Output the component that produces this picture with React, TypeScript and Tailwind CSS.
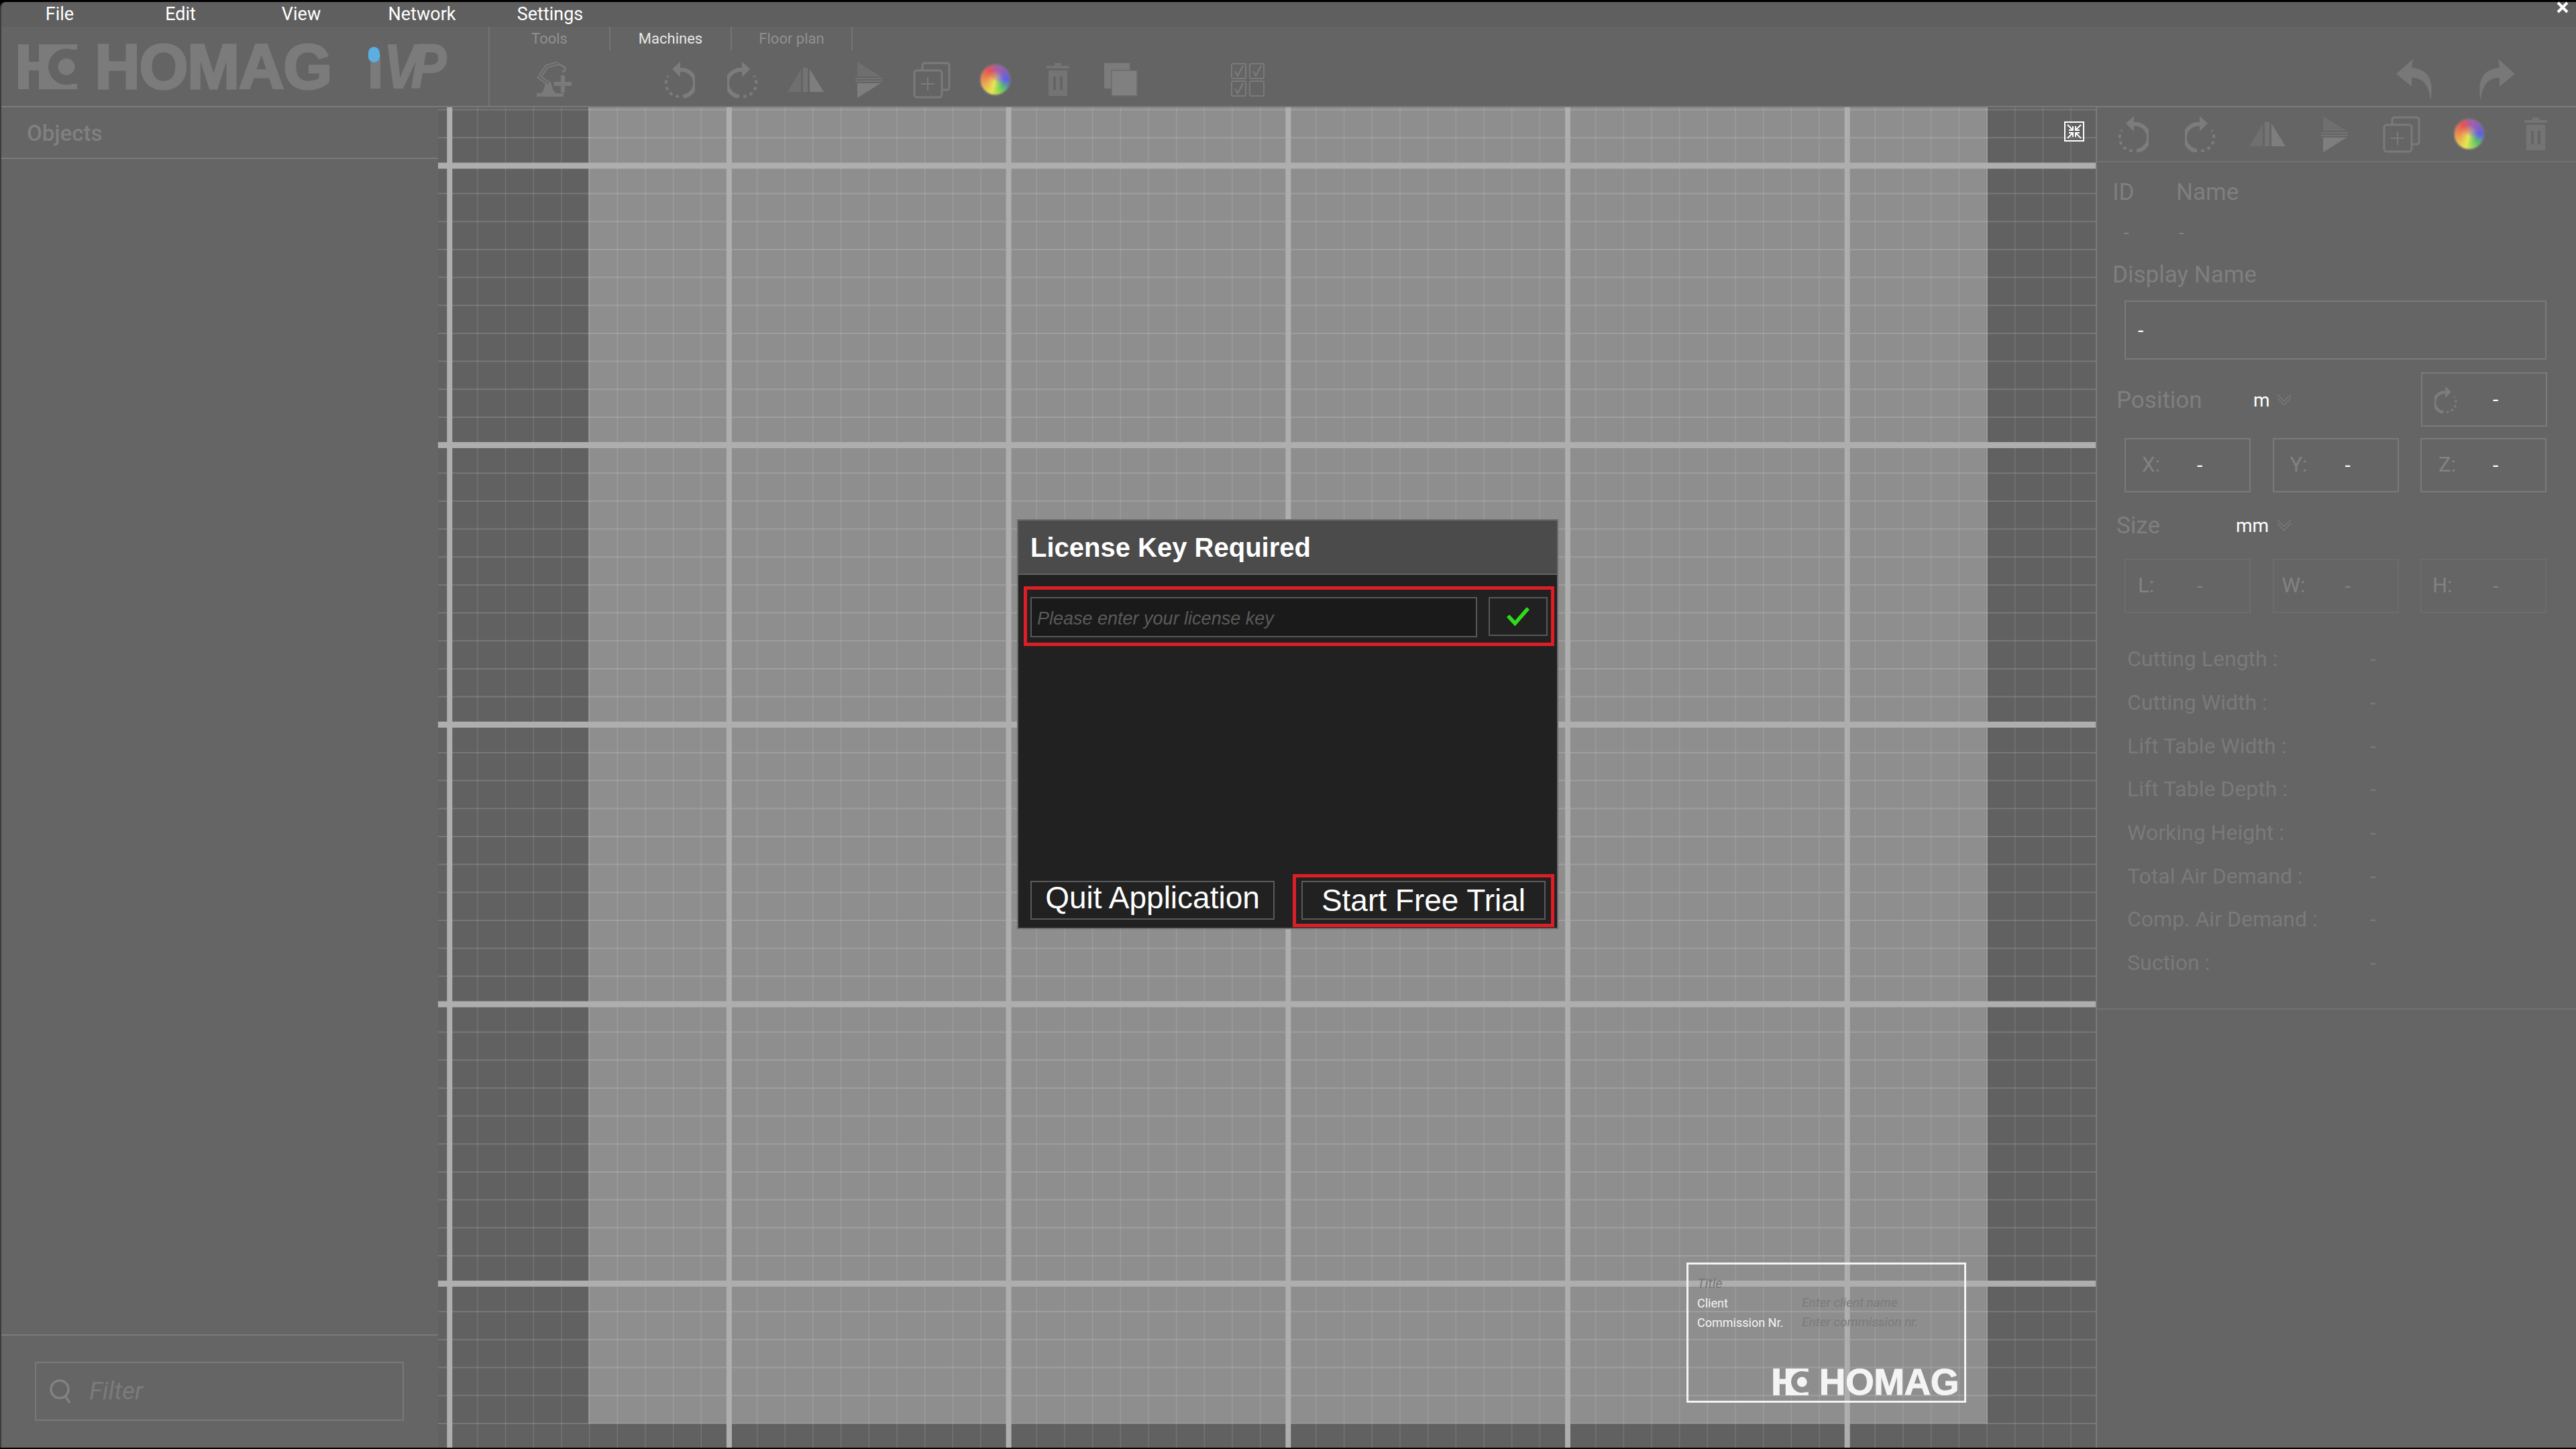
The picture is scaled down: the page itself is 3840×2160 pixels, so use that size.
const MENU = ["File", "Edit", "View", "Network"];

const STATS = [
  "Cutting Length :",
  "Cutting Width :",
  "Lift Table Width :",
  "Lift Table Depth :",
  "Working Height :",
  "Total Air Demand :",
  "Comp. Air Demand :",
  "Suction :",
];

const POSITION = [
  { label: "X:", pad: "pl-[24px]" },
  { label: "Y:", pad: "pl-[24px]" },
  { label: "Z:", pad: "pl-[25px]" },
];

const SIZE = [
  { label: "L:", pad: "pl-[18px]" },
  { label: "W:", pad: "pl-[12px]" },
  { label: "H:", pad: "pl-[16px]" },
];

const GRID_STEP = 41.667;
const GRID_W = 2471;
const GRID_H = 1998;

function RotateIcon({ flip = false, small = false, color = "#7c7c7c" }: { flip?: boolean; small?: boolean; color?: string }) {
  return (
    <svg
      viewBox="0 0 46 54"
      className={small ? "h-[40px] w-[34px]" : "h-[54px] w-[46px]"}
      style={{ transform: flip ? "scaleX(-1)" : undefined }}
    >
      <path d="M24 12 A20 20 0 0 1 28 52" fill="none" stroke={color} strokeWidth="6" />
      <path d="M22 52 A20 20 0 0 1 6 21" fill="none" stroke={color} strokeWidth="4" strokeDasharray="5 5" />
      <polygon points="24,0 24,23 12,11" fill={color} />
    </svg>
  );
}

function MirrorH() {
  return (
    <svg viewBox="0 0 56 36" className="h-[36px] w-[56px]">
      <polygon points="1,36 21,36 21,2" fill="#6f6f6f" />
      <rect x="24" y="0" width="7" height="36" fill="#747474" />
      <polygon points="34,2 34,36 55,36" fill="#7e7e7e" />
    </svg>
  );
}

function MirrorV() {
  return (
    <svg viewBox="0 0 40 54" className="h-[54px] w-[40px]">
      <polygon points="3,0 38,22 3,22" fill="#6f6f6f" />
      <rect x="0" y="24" width="40" height="2" fill="#747474" />
      <rect x="0" y="28" width="40" height="2" fill="#747474" />
      <polygon points="3,32 38,32 3,54" fill="#7e7e7e" />
    </svg>
  );
}

function CopyPlus() {
  return (
    <svg viewBox="0 0 56 55" className="h-[55px] w-[56px]" fill="none" stroke="#7a7a7a" strokeWidth="3">
      <path d="M14 12 V6 Q14 2 18 2 H50 Q54 2 54 6 V38 Q54 42 50 42 H43" />
      <rect x="2" y="13" width="41" height="40" rx="4" />
      <path d="M22 23 V43 M12 33 H32" strokeWidth="2" />
    </svg>
  );
}

function ColorWheel() {
  return (
    <div className="h-[48px] w-[47px] rounded-full border-2 border-[#767076] bg-[radial-gradient(circle,#eeee6099_0%,#eeee6000_45%),conic-gradient(#a45fa8_20deg,#5c60e6_90deg,#5fc860_140deg,#e6e650_195deg,#e89050_270deg,#e45555_325deg,#a45fa8_380deg)] blur-[1px]" />
  );
}

function TrashIcon() {
  return (
    <svg viewBox="0 0 34 50" className="h-[50px] w-[34px]">
      <rect x="12" y="0" width="10" height="4" fill="#747474" />
      <rect x="0" y="4" width="34" height="4" fill="#747474" />
      <path d="M3 11 H31 V49 H3 Z M10 20 V40 H14 V20 Z M20 20 V40 H24 V20 Z" fill="#747474" fillRule="evenodd" />
    </svg>
  );
}

function StackIcon() {
  return (
    <svg viewBox="0 0 50 50" className="h-[50px] w-[50px]">
      <rect x="0" y="0" width="38" height="38" fill="#7b7b7b" />
      <rect x="11" y="11" width="38" height="38" fill="#808080" stroke="#6b6b6b" strokeWidth="1.5" />
    </svg>
  );
}

function ChecksIcon() {
  return (
    <svg viewBox="0 0 50 50" className="h-[50px] w-[50px]" fill="none" stroke="#7a7a7a" strokeWidth="2">
      <rect x="1" y="1" width="21" height="22" rx="2" />
      <rect x="28" y="1" width="21" height="22" rx="2" />
      <rect x="1" y="27" width="21" height="22" rx="2" />
      <rect x="28" y="27" width="21" height="22" rx="2" />
      <path d="M6 12 L10 19 L18 4 M33 12 L37 19 L45 4 M6 38 L10 45 L18 30" strokeWidth="2.5" />
    </svg>
  );
}

function RobotPlus() {
  return (
    <svg viewBox="0 0 54 54" className="h-[54px] w-[54px]" fill="none" stroke="#7a7a7a">
      <rect x="0" y="47" width="40" height="5" fill="#7a7a7a" stroke="none" />
      <path d="M7 47 L11 41 L13 30 H21 L24 41 L28 47 Z" fill="#7a7a7a" stroke="none" />
      <path d="M18 33 L4 23 L15 7 L32 2" strokeWidth="6" />
      <path d="M18 33 L4 23 L15 7 L32 2" strokeWidth="2" stroke="#646464" />
      <path d="M32 3 L42 8 M42 8 Q44 14 38 15" strokeWidth="3" />
      <path d="M39 20 V46 M26 33 H52" strokeWidth="6" />
    </svg>
  );
}

function BigArrow({ flip = false }: { flip?: boolean }) {
  return (
    <svg viewBox="0 0 56 62" className="h-[62px] w-[56px]" style={{ transform: flip ? "scaleX(-1)" : undefined }}>
      <path d="M25 0 L0 22 L23 41 V28 Q48 27 51 62 Q60 16 23 13 Z" fill="#787878" />
    </svg>
  );
}

function HomagMark({ className, fg, bg }: { className: string; fg: string; bg: string }) {
  return (
    <svg viewBox="0 0 88 67" className={className}>
      <rect x="0" y="0" width="16" height="67" fill={fg} />
      <rect x="16" y="26" width="16" height="13" fill={fg} />
      <rect x="31" y="0" width="57" height="67" fill={fg} />
      <rect x="80" y="8" width="8" height="51" fill={bg} />
      <circle cx="72" cy="33.5" r="27" fill={bg} />
      <circle cx="72" cy="33.5" r="12.5" fill={fg} />
    </svg>
  );
}

function Chevron() {
  return (
    <svg viewBox="0 0 22 18" className="ml-[12px] h-[18px] w-[22px]" fill="none" stroke="#8a8a8a" strokeWidth="1">
      <path d="M1 1 L11 11 L21 1 M1 6 L11 17 L21 6" />
    </svg>
  );
}

function Dash({ dim = false }: { dim?: boolean }) {
  return <span className={dim ? "text-[30px] text-[#828282]" : "text-[30px] text-white"}>-</span>;
}

function FieldBox({ label, pad, faint = false }: { label: string; pad: string; faint?: boolean }) {
  return (
    <div className={`flex h-[81px] w-[188px] items-center border-2 ${faint ? "border-[#6c6c6c]" : "border-[#7a7a7a]"}`}>
      <span className={`w-[106px] flex-none text-[31px] text-[#828282] ${pad}`}>{label}</span>
      <Dash dim={faint} />
    </div>
  );
}

function ToolSlot({ children }: { children: React.ReactNode }) {
  return <div className="flex w-[94px] flex-none items-center justify-center">{children}</div>;
}

function PanelSlot({ children }: { children: React.ReactNode }) {
  return <div className="flex w-[100px] flex-none items-center justify-center">{children}</div>;
}

function CanvasGrid() {
  const xs = Array.from({ length: 60 }, (_, i) => 17.3 + i * GRID_STEP);
  const ys = Array.from({ length: 50 }, (_, i) => 3.6 + i * GRID_STEP);
  return (
    <svg className="absolute inset-0 h-full w-full" viewBox={`0 0 ${GRID_W} ${GRID_H}`}>
      {xs.map((x, i) => (
        <line key={`vm${i}`} x1={x} x2={x} y1={0} y2={GRID_H} stroke="#ffffff" strokeOpacity={0.12} strokeWidth={1.5} />
      ))}
      {ys.map((y, i) => (
        <line key={`hm${i}`} x1={0} x2={GRID_W} y1={y} y2={y} stroke="#ffffff" strokeOpacity={0.14} strokeWidth={2} />
      ))}
      {xs.filter((_, i) => i % 10 === 0).map((x, i) => (
        <line key={`vM${i}`} x1={x} x2={x} y1={0} y2={GRID_H} stroke="#aeaeae" strokeWidth={8} />
      ))}
      {ys.filter((_, i) => i % 10 === 2).map((y, i) => (
        <line key={`hM${i}`} x1={0} x2={GRID_W} y1={y} y2={y} stroke="#aeaeae" strokeWidth={9} />
      ))}
    </svg>
  );
}

function TitleBlock() {
  return (
    <div className="absolute left-[1861px] top-[1722px] flex h-[209px] w-[417px] flex-col border-[3px] border-[#f4f4f4] pl-[13px] pr-[8px]">
      <p className="mt-[14px] h-[29px] text-[20px] italic leading-[28px] text-[#777777]">Title</p>
      <div className="flex h-[29px] items-center text-[18px] text-[#f4f4f4]">
        <span className="w-[156px]">Client</span>
        <span className="text-[19px] italic text-[#7b7b7b]">Enter client name</span>
      </div>
      <div className="flex h-[28px] items-center text-[18px] text-[#f4f4f4]">
        <span className="w-[156px]">Commission Nr.</span>
        <span className="text-[19px] italic text-[#7b7b7b]">Enter commission nr.</span>
      </div>
      <div className="mb-[8px] mt-auto flex items-center justify-end gap-[16px]">
        <HomagMark className="h-[40px] w-[53px]" fg="#f4f4f4" bg="#8e8e8e" />
        <span className="font-['Liberation_Sans',sans-serif] text-[55px] font-bold leading-[40px] tracking-[-0.5px] text-[#f4f4f4] [-webkit-text-stroke:1px_#f4f4f4]">
          HOMAG
        </span>
      </div>
    </div>
  );
}

function LicenseDialog() {
  return (
    <div className="absolute left-[1516px] top-[774px] flex h-[611px] w-[807px] flex-col border-2 border-[#6c6c6c] bg-[#212121] font-['Liberation_Sans',sans-serif]">
      <div className="flex h-[81px] flex-none items-center border-b-2 border-[#626262] bg-[#4b4b4b] pl-[18px]">
        <h1 className="text-[40px] font-bold text-white">License Key Required</h1>
      </div>
      <div className="ml-[8px] mt-[17px] flex h-[89px] w-[791px] items-start gap-[17px] border-[5px] border-[#dc1f26] pl-[5px] pt-[11px]">
        <div className="flex h-[60px] w-[666px] items-center border-2 border-[#585858] bg-[#1a1a1a] pl-[8px] pt-[4px]">
          <span className="text-[27px] italic text-[#5a5a5a]">Please enter your license key</span>
        </div>
        <div className="flex h-[58px] w-[88px] items-center justify-center border-2 border-[#585858]">
          <svg viewBox="0 0 36 30" className="h-[28px] w-[38px]" fill="none" stroke="#2fdc1c" strokeWidth="6">
            <path d="M2 14 L13 26 L34 2" />
          </svg>
        </div>
      </div>
      <div className="mt-auto flex items-start pb-[1px] pl-[18px]">
        <div className="mt-[10px] flex h-[58px] w-[364px] items-center justify-center border-2 border-[#5a5a5a] pb-[7px] text-[46px] text-white">
          Quit Application
        </div>
        <div className="ml-[27px] h-[79px] w-[390px] border-[5px] border-[#dc1f26] pl-[8px] pt-[5px]">
          <div className="flex h-[58px] w-[364px] items-center justify-center border-2 border-[#5a5a5a] text-[46px] text-white">
            Start Free Trial
          </div>
        </div>
      </div>
    </div>
  );
}

export default function App() {
  return (
    <div className="relative h-[2160px] w-[3840px] overflow-hidden bg-black pt-[3px] font-['Roboto',sans-serif]">
      <div className="flex h-[2155px] flex-col overflow-hidden rounded-tl-[8px] border-l-2 border-[#3c3c3c]">
        {/* menu bar */}
        <div className="flex h-[37px] flex-none items-center bg-[#5f5f5f] pr-[3px] text-[27px] text-white">
          {MENU.map((m) => (
            <span key={m} className="w-[180px] -translate-x-[3px] text-center">
              {m}
            </span>
          ))}
          <span className="ml-[8px] w-[180px] text-center">Settings</span>
        </div>

        {/* toolbar */}
        <div className="flex h-[120px] flex-none border-b-2 border-[#7a7a7a] bg-[#646464]">
          <div className="flex w-[728px] flex-none items-start border-r-2 border-[#747474] pl-[25px] pt-[26px]">
            <HomagMark className="h-[67px] w-[88px]" fg="#7b7b7b" bg="#646464" />
            <span className="ml-[26px] font-['Liberation_Sans',sans-serif] text-[94px] font-bold leading-[67px] tracking-[-1.5px] text-[#7b7b7b] [-webkit-text-stroke:3px_#7b7b7b]">
              HOMAG
            </span>
            <div className="relative ml-[53px] flex font-['Liberation_Sans',sans-serif] text-[93px] font-bold leading-[67px] text-[#7b7b7b] [-webkit-text-stroke:2px_#7b7b7b]">
              <span>ı</span>
              <span className="-ml-[1px] inline-block origin-left scale-x-[.85] italic tracking-[-14px]">VP</span>
              <span className="absolute left-[2px] top-[4px] h-[23px] w-[17px] rounded-full bg-[#5aaee0]" />
            </div>
          </div>
          <div className="flex min-w-0 flex-1 flex-col">
            <div className="flex h-[35px] flex-none text-[22px] text-[#909090]">
              <span className="flex w-[180px] items-center justify-center border-r-2 border-[#747474]">Tools</span>
              <span className="flex w-[181px] items-center justify-center border-r-2 border-[#747474] text-[#e6e6e6]">Machines</span>
              <span className="flex w-[180px] items-center justify-center border-r-2 border-[#747474]">Floor plan</span>
            </div>
            <div className="mt-[17px] flex h-[54px] items-center">
              <div className="flex w-[194px] flex-none justify-center">
                <RobotPlus />
              </div>
              <div className="w-[42px] flex-none" />
              <ToolSlot><RotateIcon /></ToolSlot>
              <ToolSlot><RotateIcon flip /></ToolSlot>
              <ToolSlot><MirrorH /></ToolSlot>
              <ToolSlot><MirrorV /></ToolSlot>
              <ToolSlot><CopyPlus /></ToolSlot>
              <ToolSlot><ColorWheel /></ToolSlot>
              <ToolSlot><TrashIcon /></ToolSlot>
              <ToolSlot><StackIcon /></ToolSlot>
              <div className="w-[95px] flex-none" />
              <ToolSlot><ChecksIcon /></ToolSlot>
              <div className="ml-auto flex w-[177px] flex-none justify-between">
                <BigArrow />
                <BigArrow flip />
              </div>
              <div className="w-[91px] flex-none" />
            </div>
          </div>
        </div>

        <div className="flex min-h-0 flex-1">
          {/* objects panel */}
          <aside className="flex w-[651px] flex-none flex-col bg-[#656565]">
            <div className="flex h-[77px] flex-none items-center border-b-2 border-[#7a7a7a] pl-[38px] pt-[2px] text-[33px] font-medium text-[#808080]">
              Objects
            </div>
            <div className="flex-1" />
            <div className="h-[169px] flex-none border-t-2 border-[#7a7a7a] pl-[50px] pt-[39px]">
              <div className="flex h-[88px] w-[550px] items-center border-2 border-[#797979] pl-[20px]">
                <svg viewBox="0 0 34 36" className="h-[36px] w-[34px]" fill="none" stroke="#828282" strokeWidth="3.5">
                  <circle cx="15" cy="15" r="13" />
                  <path d="M23 25 L30 35" />
                </svg>
                <span className="ml-[25px] text-[37px] italic text-[#7b7b7b]">Filter</span>
              </div>
            </div>
          </aside>

          {/* canvas */}
          <main className="relative min-w-0 flex-1 overflow-hidden bg-[#616161]">
            <div className="absolute left-[224px] top-0 h-[1962px] w-[2086px] bg-[#8e8e8e]" />
            <CanvasGrid />
            <div className="absolute left-[2424px] top-[21px] flex h-[30px] w-[30px] items-center justify-center border-2 border-white">
              <svg viewBox="0 0 24 24" className="h-[24px] w-[24px]" fill="none" stroke="#ffffff" strokeWidth="2">
                <path d="M2 2 L10 10 M10 4 V10 H4 M22 2 L14 10 M14 4 V10 H20 M2 22 L10 14 M10 20 V14 H4 M22 22 L14 14 M14 20 V14 H20" />
              </svg>
            </div>
            <TitleBlock />
          </main>

          {/* properties panel */}
          <aside className="flex w-[716px] flex-none flex-col border-l-2 border-[#7a7a7a] bg-[#656565]">
            <div className="flex h-[82px] flex-none items-center border-b-2 border-[#717171] pl-[4px]">
              <PanelSlot><RotateIcon /></PanelSlot>
              <PanelSlot><RotateIcon flip /></PanelSlot>
              <PanelSlot><MirrorH /></PanelSlot>
              <PanelSlot><MirrorV /></PanelSlot>
              <PanelSlot><CopyPlus /></PanelSlot>
              <PanelSlot><ColorWheel /></PanelSlot>
              <PanelSlot><TrashIcon /></PanelSlot>
            </div>
            <div className="h-[1263px] flex-none border-b-2 border-[#717171] text-[#7f7f7f]">
              <div className="mt-[25px] flex h-[40px] items-center pl-[23px] text-[35px]">
                <span className="w-[95px]">ID</span>
                <span>Name</span>
              </div>
              <div className="mt-[20px] flex h-[40px] items-center pl-[40px] text-[#828282]">
                <span className="w-[82px] text-[28px]">-</span>
                <span className="text-[28px]">-</span>
              </div>
              <div className="mt-[23px] flex h-[40px] items-center pl-[23px] text-[35px]">Display Name</div>
              <div className="ml-[41px] mt-[18px] flex h-[88px] w-[629px] items-center border-2 border-[#7a7a7a] pl-[18px]">
                <Dash />
              </div>
              <div className="mt-[19px] flex h-[81px] items-center pl-[29px]">
                <span className="mt-[3px] w-[204px] text-[35px]">Position</span>
                <span className="mt-[3px] w-[23px] text-[28px] text-white">m</span>
                <Chevron />
                <div className="ml-[193px] flex h-[81px] w-[188px] items-center border-2 border-[#7a7a7a] pl-[18px]">
                  <RotateIcon flip small />
                  <span className="ml-[53px]"><Dash /></span>
                </div>
              </div>
              <div className="ml-[41px] mt-[17px] flex w-[629px] justify-between">
                {POSITION.map((f) => (
                  <FieldBox key={f.label} label={f.label} pad={f.pad} />
                ))}
              </div>
              <div className="mt-[9px] flex h-[80px] items-center pl-[29px]">
                <span className="mt-[2px] w-[178px] text-[35px]">Size</span>
                <span className="mt-[2px] w-[49px] text-[28px] text-white">mm</span>
                <Chevron />
              </div>
              <div className="ml-[41px] mt-[10px] flex w-[629px] justify-between">
                {SIZE.map((f) => (
                  <FieldBox key={f.label} label={f.label} pad={f.pad} faint />
                ))}
              </div>
              <div className="mt-[36px] text-[32px] text-[#7a7a7a]">
                {STATS.map((s) => (
                  <div key={s} className="flex h-[64.7px] items-center pl-[45px]">
                    <span className="w-[362px]">{s}</span>
                    <span>-</span>
                  </div>
                ))}
              </div>
            </div>
          </aside>
        </div>
      </div>

      <LicenseDialog />

      <svg viewBox="0 0 18 18" className="absolute left-[3811px] top-[2px] h-[18px] w-[18px]" fill="none" stroke="#ffffff" strokeWidth="4">
        <path d="M2 2 L16 16 M16 2 L2 16" />
      </svg>
    </div>
  );
}
